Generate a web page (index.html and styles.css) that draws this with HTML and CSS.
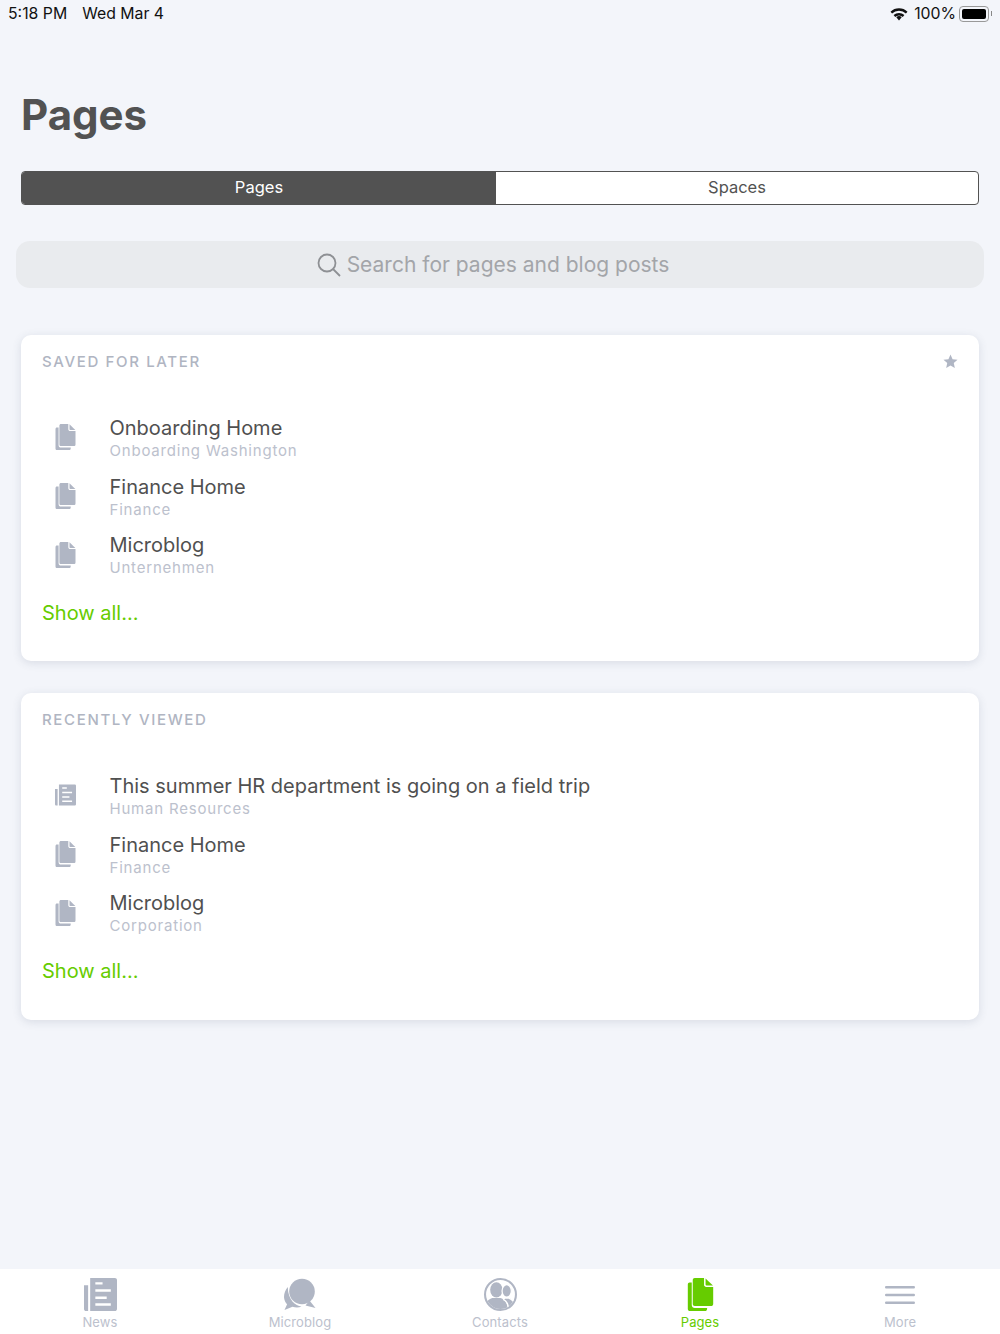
FILE: index.html
```html
<!DOCTYPE html>
<html>
<head>
  <title>Pages</title>
  <link rel="stylesheet" href="styles.css">
</head>
<body>
  <svg class="icon-defs" width="0" height="0">
    <symbol id="icon-page" viewBox="0 0 20 26">
      <path d="M0 5.200c0-1 .6-1.700 1.400-1.700h1.700v17.700c0 1.500 1 2.400 2.400 2.400h9.700v.8c0 1-.7 1.600-1.600 1.600H1.600C.7 26 0 25.400 0 24.400z"/>
      <path d="M5.500 0h7.300v5.300c0 1 .8 1.800 1.800 1.800H20v13.300c0 1-.7 1.600-1.600 1.600H5.500c-1 0-1.600-.7-1.600-1.600V1.600C3.900.7 4.600 0 5.500 0z"/>
      <path d="M14 .3l5.800 5.700h-5c-.5 0-.8-.3-.8-.8z"/>
    </symbol>
    <symbol id="icon-news" viewBox="0 0 32 32">
      <path fill-rule="evenodd" d="M6 0h24c1 0 2 .8 2 2v28c0 1.200-1 2-2 2H6zM11 4v2.300h7V4zM11 11v2.300h15V11zM11 18v2.300h11V18zM11 24.500v2.300h15v-2.300z"/>
      <path d="M0 7h4v25H2c-1.200 0-2-.8-2-2z"/>
    </symbol>
    <symbol id="icon-chat" viewBox="0 0 33 32">
      <circle cx="18" cy="13" r="12.800"/>
      <path d="M25.500 22l6 7.500-10-2.500z"/>
      <path d="M3.800 8.500C1 12-.3 16 .1 19.500c.3 2.500 1.400 4.700 3 6.300L.5 31.500l8-3.300c3 1 6.500 1 9-.2-6-1-13.500-6-13.700-19.500z"/>
    </symbol>
  </svg>

  <div class="status-bar">
    <div class="status-time"><span>5:18 PM</span><span>Wed Mar 4</span></div>
    <div class="status-right">
      <svg class="wifi" viewBox="0 0 18 14" width="18" height="14">
        <path d="M9 13.500l-2.700-3.200a4 4 0 0 1 5.400 0z"/>
        <path d="M.5 4.700a12.200 12.200 0 0 1 17 0l-1.600 1.800a9.800 9.800 0 0 0-13.800 0z"/>
        <path d="M3.600 8.100a7.800 7.800 0 0 1 10.800 0l-1.600 1.800a5.500 5.500 0 0 0-7.600 0z"/>
      </svg>
      <span>100%</span>
      <div class="battery"><div class="battery-fill"></div></div>
      <div class="battery-tip"></div>
    </div>
  </div>

  <h1 class="page-title">Pages</h1>

  <div class="segments">
    <div class="segment active">Pages</div>
    <div class="segment">Spaces</div>
  </div>

  <div class="search">
    <svg viewBox="0 0 24 24" width="24" height="24" class="search-icon">
      <circle cx="10" cy="10" r="8.500"/>
      <path d="M16 16l7 7"/>
    </svg>
    <span>Search for pages and blog posts</span>
  </div>

  <div class="card">
    <div class="card-head">
      <h2>SAVED FOR LATER</h2>
      <svg class="star" viewBox="0 0 16 16" width="15" height="15">
        <path d="M8 .6l2.200 4.900 5.300.6-4 3.600 1.100 5.300L8 12.300 3.400 15l1.100-5.300-4-3.600 5.300-.6z"/>
      </svg>
    </div>
    <ul class="list">
      <li>
        <svg class="row-icon"><use href="#icon-page"/></svg>
        <div><div class="row-title">Onboarding Home</div><div class="row-sub">Onboarding Washington</div></div>
      </li>
      <li>
        <svg class="row-icon"><use href="#icon-page"/></svg>
        <div><div class="row-title">Finance Home</div><div class="row-sub">Finance</div></div>
      </li>
      <li>
        <svg class="row-icon"><use href="#icon-page"/></svg>
        <div><div class="row-title">Microblog</div><div class="row-sub">Unternehmen</div></div>
      </li>
    </ul>
    <div class="show-all">Show all...</div>
  </div>

  <div class="card">
    <div class="card-head">
      <h2>RECENTLY VIEWED</h2>
    </div>
    <ul class="list">
      <li>
        <svg class="row-icon"><use href="#icon-news"/></svg>
        <div><div class="row-title">This summer HR department is going on a field trip</div><div class="row-sub">Human Resources</div></div>
      </li>
      <li>
        <svg class="row-icon"><use href="#icon-page"/></svg>
        <div><div class="row-title">Finance Home</div><div class="row-sub">Finance</div></div>
      </li>
      <li>
        <svg class="row-icon"><use href="#icon-page"/></svg>
        <div><div class="row-title">Microblog</div><div class="row-sub">Corporation</div></div>
      </li>
    </ul>
    <div class="show-all">Show all...</div>
  </div>

  <div class="tab-bar">
    <div class="tab">
      <svg class="tab-icon"><use href="#icon-news"/></svg>
      <span>News</span>
    </div>
    <div class="tab">
      <svg class="tab-icon chat-icon"><use href="#icon-chat"/></svg>
      <span>Microblog</span>
    </div>
    <div class="tab">
      <svg class="tab-icon" viewBox="0 0 32 32">
        <defs>
          <clipPath id="contacts-clip"><circle cx="16" cy="16" r="14"/></clipPath>
        </defs>
        <circle cx="16" cy="16" r="15" class="contact-ring"/>
        <g clip-path="url(#contacts-clip)">
          <ellipse cx="12" cy="11.500" rx="6" ry="7.500"/>
          <path d="M0 32c0-8 4-11 8-12.500h8c4 1.500 7 4.500 7 12.500z"/>
          <ellipse cx="22" cy="12.500" rx="4.500" ry="6" stroke="#fff" stroke-width="1.200"/>
          <path d="M20 19.500h4c3 1 7 3 7 12.500h-7c0-5-1-9-5-11z" stroke="#fff" stroke-width="1.200"/>
        </g>
      </svg>
      <span>Contacts</span>
    </div>
    <div class="tab active">
      <svg class="tab-icon"><use href="#icon-page"/></svg>
      <span>Pages</span>
    </div>
    <div class="tab">
      <svg class="tab-icon" viewBox="0 0 32 32">
        <rect x="1" y="7.800" width="29" height="2.400" rx="1"/>
        <rect x="1" y="15.300" width="29" height="2.400" rx="1"/>
        <rect x="1" y="22.800" width="29" height="2.400" rx="1"/>
      </svg>
      <span>More</span>
    </div>
  </div>
</body>
</html>
```

FILE: styles.css
```css
/* Reset styles */
*,
*::before,
*::after {
  box-sizing: border-box;
  margin: 0;
  padding: 0;
}

body {
  font-family: Inter, "Liberation Sans", sans-serif;
  background-color: #f3f5fa;
  color: #4f4f4f;
  height: 1334px;
  display: flex;
  flex-direction: column;
  overflow: hidden;
}

.icon-defs {
  position: absolute;
}

/* Status bar */
.status-bar {
  display: flex;
  justify-content: space-between;
  align-items: center;
  height: 26px;
  padding: 1px 8px 0;
  font-size: 15.800px;
  color: #111;
}

.status-time {
  display: flex;
  gap: 15px;
}

.status-right {
  display: flex;
  align-items: center;
}

.wifi {
  fill: #111;
  margin-right: 6px;
}

.battery {
  width: 30px;
  height: 16px;
  margin-left: 3px;
  margin-right: 1px;
  padding: 2px;
  border: 1px solid #999;
  border-radius: 4px;
}

.battery-fill {
  height: 100%;
  background-color: #000;
  border-radius: 2px;
}

.battery-tip {
  width: 1px;
  height: 5px;
  margin-left: 1px;
  background-color: #888;
}

/* Title */
.page-title {
  margin: 63px 0 0 21px;
  font-size: 42px;
  line-height: 52px;
  font-weight: 700;
  color: #525252;
}

/* Segments */
.segments {
  display: flex;
  margin: 30px 21px 0;
  height: 34px;
  border: 1px solid #525252;
  border-radius: 4px;
  overflow: hidden;
  background-color: #fff;
}

.segment {
  flex: 1;
  display: flex;
  align-items: center;
  justify-content: center;
  padding-bottom: 2px;
  font-size: 16.500px;
  color: #525252;
}

.segment.active {
  flex: 0 0 474px;
  background-color: #525252;
  color: #fff;
}

/* Search */
.search {
  display: flex;
  align-items: center;
  justify-content: center;
  gap: 6px;
  margin: 36px 16px 0;
  padding-right: 14px;
  height: 47px;
  border-radius: 14px;
  background-color: #e9ebee;
  font-size: 21px;
  color: #a3a5a9;
}

.search-icon {
  fill: none;
  stroke: #8e9094;
  stroke-width: 1.800;
}

/* Cards */
.card {
  margin: 47px 21px 0;
  height: 326px;
  padding: 0 21px;
  background-color: #fff;
  border-radius: 10px;
  box-shadow: 0 2px 10px rgba(60, 70, 100, 0.14);
}

.card + .card {
  margin-top: 32px;
  height: 327px;
}

.card-head {
  display: flex;
  justify-content: space-between;
  align-items: center;
  height: 52px;
}

.card-head h2 {
  font-size: 15px;
  font-weight: 500;
  letter-spacing: 1.650px;
  color: #b0b5c2;
}

.star {
  fill: #b0b6c4;
}

.list {
  list-style: none;
  margin-top: 21px;
}

.list li {
  display: flex;
  align-items: center;
  height: 58.700px;
}

.row-icon {
  width: 21px;
  height: 26px;
  margin: 0 33.500px 0 13px;
  fill: #b0b6c4;
  flex-shrink: 0;
}

.row-title {
  font-size: 20px;
  line-height: 26px;
  color: #505050;
}

.row-sub {
  font-size: 15px;
  line-height: 19px;
  letter-spacing: 0.800px;
  color: #bcc1cd;
}

.show-all {
  margin-top: 16px;
  font-size: 20px;
  line-height: 26px;
  color: #66cc00;
}

/* Tab bar */
.tab-bar {
  display: flex;
  margin-top: auto;
  height: 65px;
  background-color: #fff;
}

.tab {
  flex: 1;
  display: flex;
  flex-direction: column;
  align-items: center;
  padding-top: 9px;
  font-size: 13px;
  line-height: 16px;
  letter-spacing: 0.100px;
  color: #bcc1cd;
}

.tab-icon {
  width: 33px;
  height: 33px;
  margin-bottom: 3px;
  fill: #b0b6c4;
}

.contact-ring {
  fill: #fff;
  stroke: #b0b6c4;
  stroke-width: 2;
}

.tab.active {
  color: #66cc00;
}

.tab.active .tab-icon {
  fill: #66cc00;
}
```
